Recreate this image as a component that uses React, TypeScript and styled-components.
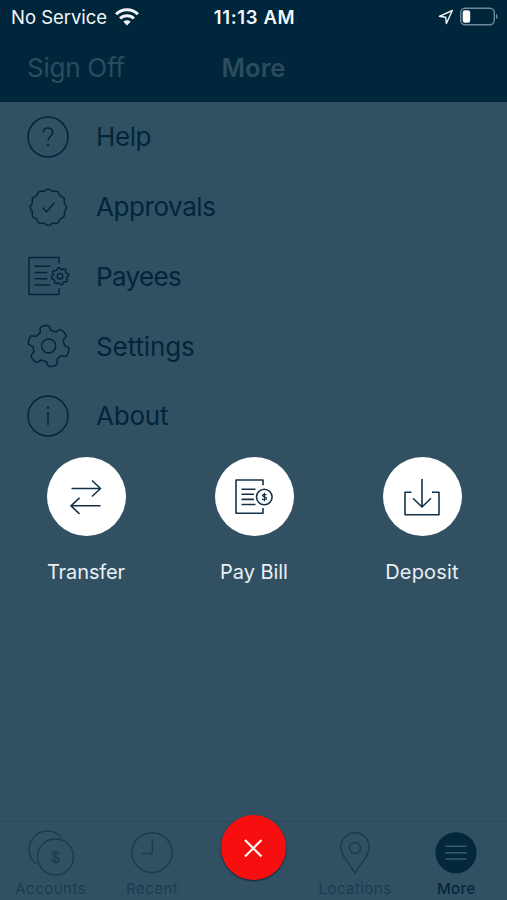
import React from "react";
import styled, { createGlobalStyle } from "styled-components";

const Global = createGlobalStyle`
  * { box-sizing: border-box; }
  body { margin: 0; background: #315163; font-family: Inter, "Liberation Sans", sans-serif; }
  svg { display: block; flex: none; overflow: visible; }
`;

const navy = "#00263b";
const slate = "#315163";

const Screen = styled.div`
  width: 507px;
  height: 900px;
  background: ${slate};
  display: flex;
  flex-direction: column;
  overflow: hidden;
`;

const Header = styled.header`
  height: 102px;
  background: ${navy};
  flex: none;
`;

const StatusBar = styled.div`
  height: 34px;
  padding: 0 9px 0 11px;
  display: grid;
  grid-template-columns: 1fr auto 1fr;
  align-items: center;
  color: #f4f7f9;
`;

const StatusSide = styled.div<{ $end?: boolean }>`
  display: flex;
  align-items: center;
  gap: ${(p) => (p.$end ? 6 : 8)}px;
  justify-content: ${(p) => (p.$end ? "flex-end" : "flex-start")};
`;

const Label = styled.span<{ $size: number; $weight?: number; $spacing?: number; $color?: string }>`
  font-size: ${(p) => p.$size}px;
  font-weight: ${(p) => p.$weight ?? 400};
  letter-spacing: ${(p) => p.$spacing ?? 0}px;
  color: ${(p) => p.$color ?? "inherit"};
  line-height: 1.2;
  white-space: nowrap;
`;

const NavBar = styled.div`
  height: 68px;
  padding: 0 27px;
  display: grid;
  grid-template-columns: 1fr auto 1fr;
  align-items: center;
  color: #2b4c5f;
`;

const Menu = styled.ul`
  list-style: none;
  margin: 0;
  padding: 0;
  height: 355px;
  flex: none;
`;

const MenuRow = styled.li`
  height: 69.75px;
  padding-left: 27px;
  display: flex;
  align-items: center;
  gap: 27px;
  color: ${navy};
`;

const Actions = styled.section`
  display: grid;
  grid-template-columns: repeat(3, 168px);
  justify-content: center;
  padding-left: 1px;
  flex: 1;
`;

const Action = styled.div`
  display: flex;
  flex-direction: column;
  align-items: center;
  gap: 24px;
  color: #e9eff5;
`;

const ActionButton = styled.button`
  width: 79px;
  height: 79px;
  padding: 0;
  border: 0;
  border-radius: 50%;
  background: #fff;
  color: #14334a;
  display: grid;
  place-items: center;
`;

const TabBar = styled.nav`
  height: 79px;
  flex: none;
  border-top: 1px solid #294a5c;
  display: grid;
  grid-template-columns: repeat(5, 1fr);
`;

const Tab = styled.div<{ $active?: boolean }>`
  display: flex;
  flex-direction: column;
  align-items: center;
  padding-top: 8px;
  gap: 4px;
  color: ${(p) => (p.$active ? "#03273b" : "#1a3c50")};
`;

const CloseButton = styled.button`
  width: 65px;
  height: 65px;
  margin-top: -7px;
  padding: 0;
  border: 0;
  border-radius: 50%;
  background: #f70f0f;
  color: #fff;
  justify-self: center;
  display: grid;
  place-items: center;
  box-shadow: 0 1px 2px rgba(0, 20, 35, 0.75);
`;

/** Closed radial outline: `profile` gives the radius for each phase (-1..1) of a lobe. */
function lobedPath(cx: number, cy: number, lobes: number, startDeg: number, profile: (c: number) => number) {
  const steps = 180;
  const points = Array.from({ length: steps }, (_, i) => {
    const a = (i / steps) * Math.PI * 2;
    const r = profile(Math.cos(lobes * (a - (startDeg * Math.PI) / 180)));
    return `${(cx + r * Math.cos(a)).toFixed(2)} ${(cy + r * Math.sin(a)).toFixed(2)}`;
  });
  return `M${points.join("L")}Z`;
}

const gearProfile = (outer: number, inner: number) => (c: number) =>
  (outer + inner) / 2 + ((outer - inner) / 2) * Math.tanh(3 * (c + 0.1));

const Icon = ({ w = 42, h = 42, sw = 1.5, children }: { w?: number; h?: number; sw?: number; children: React.ReactNode }) => (
  <svg width={w} height={h} viewBox={`0 0 ${w} ${h}`} fill="none" stroke="currentColor" strokeWidth={sw} strokeLinejoin="round">
    {children}
  </svg>
);

const HelpIcon = () => (
  <Icon>
    <circle cx="21" cy="21" r="20" />
    <path d="M16.4 16.8c0-3 1.9-4.7 4.6-4.7s4.6 1.8 4.6 4.3c0 2.2-1.3 3.2-2.6 4.4-1.3 1.1-2 1.9-2 4.2" />
    <circle cx="21" cy="28.9" r="1.2" fill="currentColor" stroke="none" />
  </Icon>
);

const ApprovalsIcon = () => (
  <Icon>
    <path d={lobedPath(21.3, 21.3, 12, -90, (c) => 17.4 + c * 0.7)} />
    <path d="M15.5 21.5l4 4.3 8-8.8" />
  </Icon>
);

const PayeesIcon = () => (
  <Icon>
    <path d="M32 8.5V2.5H2v37h30v-6.2M7.5 11.2h16M7.5 17.5h13M7.5 23.8h13M7.5 30h16" />
    <path d={lobedPath(33, 21.2, 8, -100, gearProfile(8.6, 6.8))} />
    <circle cx="33" cy="21.2" r="2.8" />
  </Icon>
);

const SettingsIcon = () => (
  <Icon>
    <path d={lobedPath(21.6, 21, 6, -102, gearProfile(20.6, 15.5))} />
    <circle cx="21.6" cy="21" r="7" />
  </Icon>
);

const AboutIcon = () => (
  <Icon>
    <circle cx="21" cy="21" r="20" />
    <path d="M21 17v13" />
    <circle cx="21" cy="12.7" r="1.2" fill="currentColor" stroke="none" />
  </Icon>
);

const TransferIcon = () => (
  <Icon w={32} h={36} sw={1.6}>
    <path d="M1.5 9.5h29M22 1.5l8.5 8-8.5 8M30.5 26.8H1M9.5 18.8L1 26.8l8.5 8" />
  </Icon>
);

const PayBillIcon = () => (
  <Icon w={38} h={36} sw={1.6}>
    <path d="M28 6.2V1H1v33.2h27V29M6.5 10.2h14M6.5 15.3h12.5M6.5 20.4h12.5M6.5 25.5h14" />
    <circle cx="29.3" cy="18" r="7.8" />
    <path d="M31.3 16.2c-.3-1-3.8-1.2-3.8.4s4 1 4 2.8-3.8 1.7-4.3.2M29.4 13.8v8.4" strokeWidth="1.2" />
  </Icon>
);

const DepositIcon = () => (
  <Icon w={38} h={38} sw={1.6}>
    <path d="M8.5 14.2H2v22.5h34V14.2h-7M19 1v28M10 20.2l9 8.8 9-8.8" />
  </Icon>
);

const AccountsIcon = () => (
  <Icon w={46} h={46}>
    <circle cx="27.5" cy="27" r="18" />
    <path d="M33.1 7.3A18.3 18.3 0 1 0 8.2 33.9" />
    <path d="M31 24.2c-.4-2.9-6.7-3.2-6.7 0 0 3.3 6.9 1.9 6.9 5.5 0 3.4-7 3.1-7.4 0M27.5 20.6v12.8" />
  </Icon>
);

const RecentIcon = () => (
  <Icon w={42} h={46}>
    <circle cx="21" cy="22.7" r="20" />
    <path d="M21.3 8.5v15H11" />
  </Icon>
);

const LocationsIcon = () => (
  <Icon w={30} h={46}>
    <path d="M15 43C9 33 .8 25.5.8 17a14.2 14.2 0 0 1 28.4 0c0 8.5-8.2 16-14.2 26z" />
    <circle cx="15" cy="18" r="5.6" />
  </Icon>
);

const MoreIcon = () => (
  <Icon w={42} h={46}>
    <circle cx="21" cy="22.7" r="20.5" fill="currentColor" stroke="none" />
    <path d="M10.5 16.3h21M10.5 22.7h21M10.5 29.1h21" stroke="#3b596a" />
  </Icon>
);

const WifiIcon = () => (
  <svg width="24" height="18" viewBox="0 0 24 18" fill="none" stroke="currentColor" strokeWidth="3">
    <path d="M1.1 6.3a15.6 15.6 0 0 1 21.8 0M5.1 10.5a9.8 9.8 0 0 1 13.8 0" />
    <path d="M12 17.5l-3.6-3.7a5.2 5.2 0 0 1 7.2 0z" fill="currentColor" stroke="none" />
  </svg>
);

const LocationArrow = () => (
  <svg width="16" height="16" viewBox="0 0 16 16" fill="none" stroke="currentColor" strokeWidth="1.4" strokeLinejoin="round">
    <path d="M14.3 1.5L1.4 7.3l6.2.9.8 6.3z" />
  </svg>
);

const Battery = () => (
  <svg width="38" height="18" viewBox="0 0 38 18">
    <rect x=".7" y=".2" width="33.6" height="16.6" rx="4.5" fill="none" stroke="#70899a" strokeWidth="1.4" />
    <rect x="2.7" y="2.2" width="7.5" height="12.6" rx="2.3" fill="#fff" />
    <path d="M36 5.7c2 1 2 4.6 0 5.6z" fill="#70899a" />
  </svg>
);

const menu = [
  { label: "Help", icon: <HelpIcon />, spacing: -0.4 },
  { label: "Approvals", icon: <ApprovalsIcon />, spacing: -0.42 },
  { label: "Payees", icon: <PayeesIcon />, spacing: -0.65 },
  { label: "Settings", icon: <SettingsIcon />, spacing: -0.1 },
  { label: "About", icon: <AboutIcon />, spacing: -0.2 },
];

const actions = [
  { label: "Transfer", icon: <TransferIcon />, spacing: -0.1 },
  { label: "Pay Bill", icon: <PayBillIcon />, spacing: -0.05 },
  { label: "Deposit", icon: <DepositIcon />, spacing: 0.2 },
];

export default function App() {
  return (
    <Screen>
      <Global />
      <Header>
        <StatusBar>
          <StatusSide>
            <Label $size={18.5} $spacing={-0.03}>No Service</Label>
            <WifiIcon />
          </StatusSide>
          <Label $size={18.5} $weight={600} $spacing={0.65}>11:13 AM</Label>
          <StatusSide $end>
            <LocationArrow />
            <Battery />
          </StatusSide>
        </StatusBar>
        <NavBar>
          <Label $size={26} $spacing={-0.25}>Sign Off</Label>
          <Label $size={25.5} $weight={600} $spacing={0.1}>More</Label>
          <span />
        </NavBar>
      </Header>
      <Menu>
        {menu.map((m) => (
          <MenuRow key={m.label}>
            {m.icon}
            <Label $size={26} $spacing={m.spacing}>{m.label}</Label>
          </MenuRow>
        ))}
      </Menu>
      <Actions>
        {actions.map((a) => (
          <Action key={a.label}>
            <ActionButton aria-label={a.label}>{a.icon}</ActionButton>
            <Label $size={20} $spacing={a.spacing}>{a.label}</Label>
          </Action>
        ))}
      </Actions>
      <TabBar>
        <Tab>
          <AccountsIcon />
          <Label $size={15} $spacing={0.5}>Accounts</Label>
        </Tab>
        <Tab>
          <RecentIcon />
          <Label $size={15} $spacing={0.5}>Recent</Label>
        </Tab>
        <CloseButton aria-label="Close">
          <Icon w={20} h={20} sw={2.1}>
            <path d="M2 2l16.5 16.5M18.5 2L2 18.5" />
          </Icon>
        </CloseButton>
        <Tab>
          <LocationsIcon />
          <Label $size={15} $spacing={0.5}>Locations</Label>
        </Tab>
        <Tab $active>
          <MoreIcon />
          <Label $size={15} $weight={500} $spacing={0.4}>More</Label>
        </Tab>
      </TabBar>
    </Screen>
  );
}
